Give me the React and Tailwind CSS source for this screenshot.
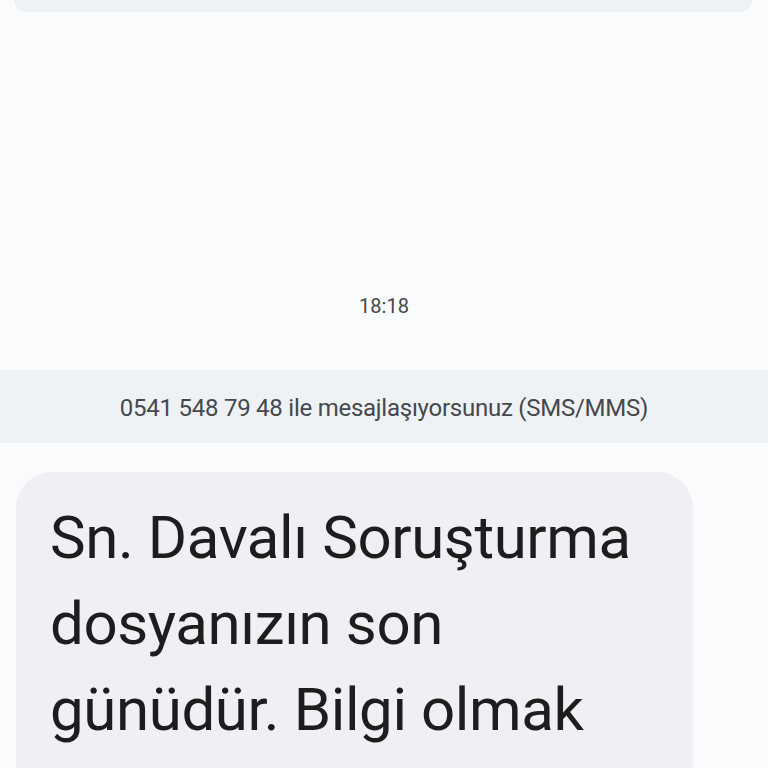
const App = () => {
  return (
    <div
      className="w-[768px] h-[768px] overflow-hidden bg-[#fafbfd] flex flex-col"
      style={{ fontFamily: "Roboto, 'Noto Sans', sans-serif" }}
    >
      <div className="h-[12px] ml-[14px] mr-[16px] bg-[#eff2f5] rounded-b-[30px] shrink-0" />

      <div className="h-[358px] shrink-0 flex items-end justify-center pb-[50px]">
        <span className="text-[20px] leading-[28px] text-[#46484c]">18:18</span>
      </div>

      <div className="h-[73px] shrink-0 bg-[#eff2f5] flex items-center justify-center">
        <span className="text-[24px] leading-[30px] tracking-[-0.25px] text-[#45484d] pt-[2px]">
          0541 548 79 48 ile mesajlaşıyorsunuz (SMS/MMS)
        </span>
      </div>

      <div className="pt-[29px] pl-[16px]">
        <div className="w-[677px] bg-[#eff0f3] rounded-[36px] pl-[34px] pr-[30px] pt-[23px] pb-[24px]">
          <p className="text-[60px] leading-[86px] text-[#1d1d1f] tracking-[-0.4px]">
            Sn. Davalı Soruşturma dosyanızın son günüdür. Bilgi olmak için
            tıklayınız
          </p>
        </div>
      </div>
    </div>
  );
};

export default App;
